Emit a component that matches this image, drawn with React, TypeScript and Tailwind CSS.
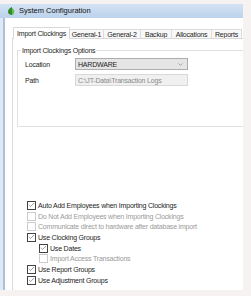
import { Check, ChevronDown } from 'lucide-react'

const tabs = [
  { name: 'Import Clockings', w: 'w-[57px]' },
  { name: 'General-1', w: 'w-[34px]' },
  { name: 'General-2', w: 'w-[37px]' },
  { name: 'Backup', w: 'w-[31px]' },
  { name: 'Allocations', w: 'w-[40px]' },
  { name: 'Reports', w: 'w-[30px]' },
]

const options = [
  { label: 'Auto Add Employees when Importing Clockings', checked: true, enabled: true, level: 0 },
  { label: 'Do Not Add Employees when Importing Clockings', checked: false, enabled: false, level: 0 },
  { label: 'Communicate direct to hardware after database import', checked: false, enabled: false, level: 0 },
  { label: 'Use Clocking Groups', checked: true, enabled: true, level: 0 },
  { label: 'Use Dates', checked: true, enabled: true, level: 1 },
  { label: 'Import Access Transactions', checked: false, enabled: false, level: 1 },
  { label: 'Use Report Groups', checked: true, enabled: true, level: 0 },
  { label: 'Use Adjustment Groups', checked: true, enabled: true, level: 0 },
]

function Leaf() {
  return (
    <svg width="7" height="8" viewBox="0 0 7 8">
      <path d="M4 0 C1 1 0 3 0 5 C0 7 2 8 4 8 L4 0 Z" fill="#2e8b2e" />
      <path d="M4 1 C6 2 7 4 6 6 C6 7 5 8 4 8 Z" fill="#6cc04a" />
    </svg>
  )
}

export default function App() {
  return (
    <div
      className="w-[251px] h-[296px] bg-[#f7f2f2] overflow-hidden text-[7px] tracking-[-0.2px] leading-none text-[#1e1e1e]"
      style={{ fontFamily: '"Liberation Sans", Arial, sans-serif' }}
    >
      <div className="mt-[4px] w-[243px] h-[286px] flex flex-col bg-white">
        {/* title bar */}
        <div className="h-[14px] flex items-center gap-[4px] pl-[8px] bg-gradient-to-b from-[#d3e2f3] to-[#bcd3ec]">
          <Leaf />
          <span className="text-[7.5px] tracking-normal text-[#111]">System Configuration</span>
        </div>

        <div className="flex-1 flex">
          <div className="w-[3px] bg-[#dfe9f5]" />
          <div className="w-[2px] bg-[#a8c1df]" />
          <div className="flex-1 flex flex-col pl-[7px] pt-[9px]">
            {/* tabs */}
            <div className="flex items-end h-[11px] pl-[1px] whitespace-nowrap">
              {tabs.map((t, i) => (
                <div
                  key={t.name}
                  className={
                    i === 0
                      ? `${t.w} h-[12px] -mb-px flex items-center justify-center bg-white border border-b-0 border-[#d9d9d9] z-10`
                      : `${t.w} h-[9px] flex items-center justify-center bg-[#f8f8f8] border-t border-r border-[#dcdcdc]`
                  }
                >
                  {t.name}
                </div>
              ))}
            </div>

            {/* tab page */}
            <div className="flex-1 border-l border-t border-[#d9d9d9] pl-[4px] pt-[11px]">
              <div className="relative h-[77px] border-l border-t border-b border-[#e0e0e0] pl-[7px]">
                <span className="absolute -top-[4px] left-[3px] bg-white px-px">Import Clockings Options</span>
                <div className="pt-[7px] flex flex-col gap-[4px]">
                  <div className="flex items-center">
                    <span className="w-[50px]">Location</span>
                    <div className="w-[113px] h-[12px] border border-[#adadad] bg-[#e5e5e5] flex items-center justify-between pl-[2px] pr-[3px]">
                      <span>HARDWARE</span>
                      <ChevronDown size={7} strokeWidth={1.5} color="#555" />
                    </div>
                  </div>
                  <div className="flex items-center">
                    <span className="w-[50px]">Path</span>
                    <div className="w-[113px] h-[12px] border border-[#d9d9d9] bg-[#f0f0f0] flex items-center pl-[2px] text-[#8a8a8a]">
                      C:\JT-Data\Transaction Logs
                    </div>
                  </div>
                </div>
              </div>

              <div className="pt-[73px] pl-[10px] flex flex-col whitespace-nowrap">
                {options.map(o => (
                  <div key={o.label} className={`h-[10.7px] flex items-center gap-[2px] ${o.level === 1 ? 'pl-[12px]' : ''}`}>
                    <div
                      className={`w-[9px] h-[9px] border flex items-center justify-center bg-white ${
                        o.enabled ? 'border-[#444]' : 'border-[#cccccc]'
                      }`}
                    >
                      {o.checked && <Check size={8} strokeWidth={1.5} color="#222" />}
                    </div>
                    <span className={o.enabled ? 'text-[#1e1e1e]' : 'text-[#9a9a9a]'}>{o.label}</span>
                  </div>
                ))}
              </div>
            </div>
          </div>
        </div>
      </div>
    </div>
  )
}
